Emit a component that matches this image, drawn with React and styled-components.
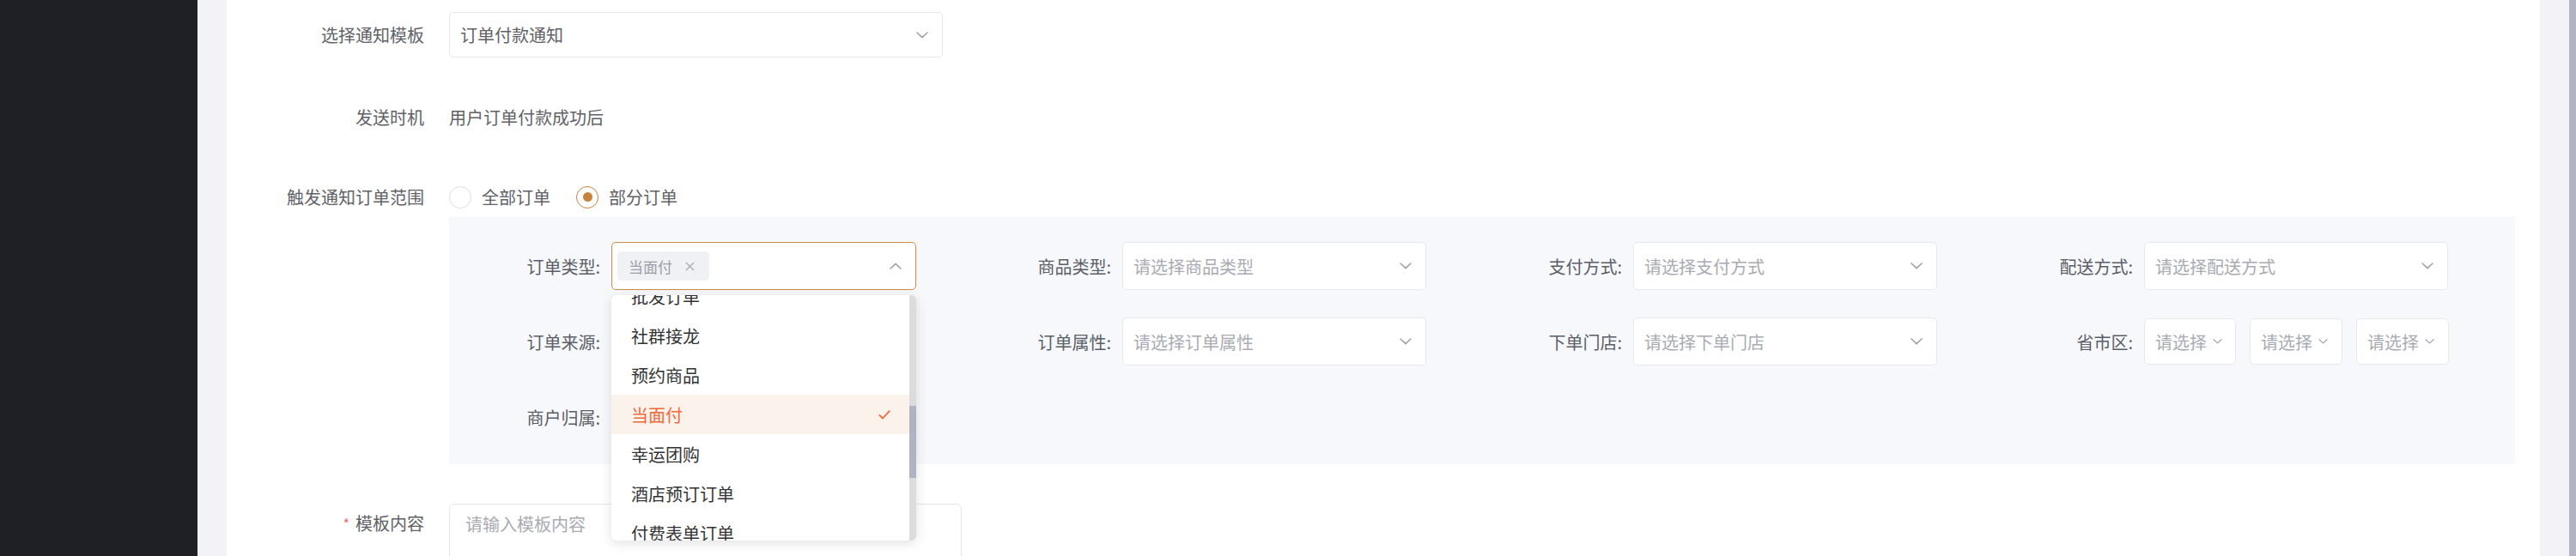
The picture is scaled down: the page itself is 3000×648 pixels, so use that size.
import React from "react";
import styled, { createGlobalStyle } from "styled-components";

const GlobalStyle = createGlobalStyle`
  html, body {
    margin: 0;
    padding: 0;
  }
  body {
    font-family: "Noto Sans CJK SC", "Noto Sans", sans-serif;
    background: #f2f2f7;
    overflow: hidden;
  }
  * {
    box-sizing: border-box;
  }
`;

// page frame
const Page = styled.div`
  display: flex;
  height: 648px;
  overflow: hidden;
`;

const Sidebar = styled.aside`
  width: 230px;
  flex-shrink: 0;
  background: #1f2026;
`;

const Main = styled.main`
  flex: 1;
  min-width: 0;
  padding: 0 34px;
  background: #f2f2f7;
`;

const PageScrollbar = styled.div`
  width: 8px;
  flex-shrink: 0;
  background: #b2b4c2;
`;

const Card = styled.div`
  height: 100%;
  padding: 14px 29px 0 0;
  background: #fff;
`;

// form rows
const FormItem = styled.div`
  display: flex;
  align-items: flex-start;
  margin-bottom: ${(p) => p.$gap ?? 43}px;
`;

const Label = styled.label`
  width: 259px;
  flex-shrink: 0;
  padding-right: 29px;
  text-align: right;
  font-size: 20px;
  line-height: ${(p) => p.$lh || 53}px;
  color: #606266;
  white-space: nowrap;
`;

const Required = styled.span`
  color: #f56c6c;
  font-size: 16px;
  margin-right: 7px;
  vertical-align: 1px;
`;

const Content = styled.div`
  flex: 1;
  min-width: 0;
`;

const PlainText = styled.div`
  font-size: 20px;
  line-height: 53px;
  color: #606266;
`;

// select
const SelectBox = styled.div`
  position: relative;
  display: flex;
  align-items: center;
  justify-content: ${(p) => (p.$compact ? "flex-start" : "space-between")};
  gap: 7px;
  width: ${(p) => p.$w}px;
  height: ${(p) => p.$h || 56}px;
  padding: ${(p) => (p.$compact ? "0 0 0 12px" : p.$focus ? "0 16px 0 6px" : "0 16px 0 12px")};
  background: #fff;
  border: 1px solid ${(p) => (p.$focus ? "#cf8b49" : "#e7e8ec")};
  border-radius: 5px;
  font-size: 20px;
  color: #606266;
  white-space: nowrap;
`;

const Placeholder = styled.span`
  color: #a8abb2;
`;

const Tag = styled.span`
  display: inline-flex;
  align-items: center;
  gap: 15px;
  height: 34px;
  padding: 0 17px 0 13px;
  background: #f0f1f5;
  border-radius: 5px;
  font-size: 17px;
  color: #9a9da5;
`;

const Chevron = ({ up, size = 14 }) => (
  <svg width={size} height={Math.round(size * 0.55)} viewBox="0 0 14 8" fill="none">
    <path
      d={up ? "M1 7L7 1.4L13 7" : "M1 1L7 6.6L13 1"}
      stroke="#9b9ea5"
      strokeWidth="1.5"
      strokeLinecap="round"
      strokeLinejoin="round"
    />
  </svg>
);

const CloseIcon = () => (
  <svg width="11" height="11" viewBox="0 0 11 11" fill="none">
    <path d="M1 1L10 10M10 1L1 10" stroke="#a8abb2" strokeWidth="1.3" />
  </svg>
);

const CheckIcon = () => (
  <svg width="14" height="11" viewBox="0 0 14 11" fill="none">
    <path d="M1.2 5.8L5 9.5L12.8 1.2" stroke="#f2693a" strokeWidth="1.8" strokeLinecap="round" strokeLinejoin="round" />
  </svg>
);

// radios
const RadioGroup = styled.div`
  display: flex;
  align-items: center;
  gap: 30px;
  height: 47px;
`;

const RadioOption = styled.label`
  display: flex;
  align-items: center;
  gap: 12px;
  font-size: 20px;
  color: #606266;
`;

const RadioDot = styled.span`
  display: flex;
  align-items: center;
  justify-content: center;
  width: 26px;
  height: 26px;
  border-radius: 50%;
  background: #fff;
  border: 1px solid ${(p) => (p.$checked ? "#c8843e" : "#dcdfe6")};

  &::after {
    content: "";
    display: ${(p) => (p.$checked ? "block" : "none")};
    width: 11px;
    height: 11px;
    border-radius: 50%;
    background: #c8843e;
  }
`;

// filter panel
const FilterPanel = styled.div`
  display: grid;
  grid-template-columns: repeat(4, 595px);
  row-gap: 32px;
  padding: 29px 0 27px;
  background: #f7f8fc;
`;

const FilterItem = styled.div`
  display: flex;
  align-items: center;
  height: 56px;
`;

const FilterLabel = styled.span`
  width: 189px;
  flex-shrink: 0;
  padding-right: 13px;
  text-align: right;
  font-size: 20px;
  color: #5a5e66;
  white-space: nowrap;
`;

const Cascader = styled.div`
  display: flex;
  gap: 16px;
`;

// dropdown popover
const Dropdown = styled.div`
  position: absolute;
  top: calc(100% + 7px);
  left: -1px;
  z-index: 10;
  width: 355px;
  height: 286px;
  overflow: hidden;
  background: #fff;
  border-radius: 6px;
  box-shadow: 0 3px 14px rgba(0, 0, 0, 0.12);
`;

const OptionList = styled.ul`
  list-style: none;
  margin: -22px 0 0;
  padding: 0;
  width: 347px;
`;

const Option = styled.li`
  display: flex;
  align-items: center;
  justify-content: space-between;
  height: 46px;
  padding: 0 22px 0 23px;
  font-size: 20px;
  color: ${(p) => (p.$active ? "#f2693a" : "#333")};
  background: ${(p) => (p.$active ? "#faf2eb" : "transparent")};
`;

const ScrollTrack = styled.div`
  position: absolute;
  top: 0;
  right: 0;
  width: 8px;
  height: 100%;
  background: #dcdcdc;
`;

const ScrollThumb = styled.div`
  position: absolute;
  top: 129px;
  left: 0;
  width: 8px;
  height: 84px;
  background: #b0b3c2;
`;

const TextArea = styled.textarea`
  display: block;
  width: 597px;
  height: 140px;
  padding: 9px 18px;
  border: 1px solid #e4e6eb;
  border-radius: 6px;
  resize: none;
  font-family: inherit;
  font-size: 20px;
  line-height: 28px;
  color: #606266;
  outline: none;

  &::placeholder {
    color: #a8abb2;
  }
`;

const orderTypes = ["批发订单", "社群接龙", "预约商品", "当面付", "幸运团购", "酒店预订订单", "付费表单订单"];

// placeholder left empty where the open dropdown covers the select
const Select = ({ placeholder = "", w = 354 }) => (
  <SelectBox $w={w}>
    <Placeholder>{placeholder}</Placeholder>
    <Chevron />
  </SelectBox>
);

const App = () => {
  return (
    <Page>
      <GlobalStyle />
      <Sidebar />
      <Main>
        <Card>
          <FormItem>
            <Label>选择通知模板</Label>
            <Content>
              <SelectBox $w={575} $h={53}>
                <span>订单付款通知</span>
                <Chevron />
              </SelectBox>
            </Content>
          </FormItem>

          <FormItem>
            <Label>发送时机</Label>
            <Content>
              <PlainText>用户订单付款成功后</PlainText>
            </Content>
          </FormItem>

          <FormItem $gap={46}>
            <Label $lh={47}>触发通知订单范围</Label>
            <Content>
              <RadioGroup>
                <RadioOption>
                  <RadioDot />
                  全部订单
                </RadioOption>
                <RadioOption>
                  <RadioDot $checked />
                  部分订单
                </RadioOption>
              </RadioGroup>
              <FilterPanel>
                <FilterItem>
                  <FilterLabel>订单类型:</FilterLabel>
                  <SelectBox $w={355} $focus>
                    <Tag>
                      当面付
                      <CloseIcon />
                    </Tag>
                    <Chevron up />
                    <Dropdown>
                      <OptionList>
                        {orderTypes.map((t) => (
                          <Option key={t} $active={t === "当面付"}>
                            {t}
                            {t === "当面付" && <CheckIcon />}
                          </Option>
                        ))}
                      </OptionList>
                      <ScrollTrack>
                        <ScrollThumb />
                      </ScrollTrack>
                    </Dropdown>
                  </SelectBox>
                </FilterItem>
                <FilterItem>
                  <FilterLabel>商品类型:</FilterLabel>
                  <Select placeholder="请选择商品类型" />
                </FilterItem>
                <FilterItem>
                  <FilterLabel>支付方式:</FilterLabel>
                  <Select placeholder="请选择支付方式" />
                </FilterItem>
                <FilterItem>
                  <FilterLabel>配送方式:</FilterLabel>
                  <Select placeholder="请选择配送方式" />
                </FilterItem>

                <FilterItem>
                  <FilterLabel>订单来源:</FilterLabel>
                  <Select />
                </FilterItem>
                <FilterItem>
                  <FilterLabel>订单属性:</FilterLabel>
                  <Select placeholder="请选择订单属性" />
                </FilterItem>
                <FilterItem>
                  <FilterLabel>下单门店:</FilterLabel>
                  <Select placeholder="请选择下单门店" />
                </FilterItem>
                <FilterItem>
                  <FilterLabel>省市区:</FilterLabel>
                  <Cascader>
                    {[107, 108, 108].map((w, i) => (
                      <SelectBox key={i} $w={w} $h={54} $compact>
                        <Placeholder>请选择</Placeholder>
                        <Chevron size={11} />
                      </SelectBox>
                    ))}
                  </Cascader>
                </FilterItem>

                <FilterItem>
                  <FilterLabel>商户归属:</FilterLabel>
                  <Select />
                </FilterItem>
              </FilterPanel>
            </Content>
          </FormItem>

          <FormItem>
            <Label $lh={46}>
              <Required>*</Required>
              模板内容
            </Label>
            <Content>
              <TextArea placeholder="请输入模板内容" />
            </Content>
          </FormItem>
        </Card>
      </Main>
      <PageScrollbar />
    </Page>
  );
};

export default App;
